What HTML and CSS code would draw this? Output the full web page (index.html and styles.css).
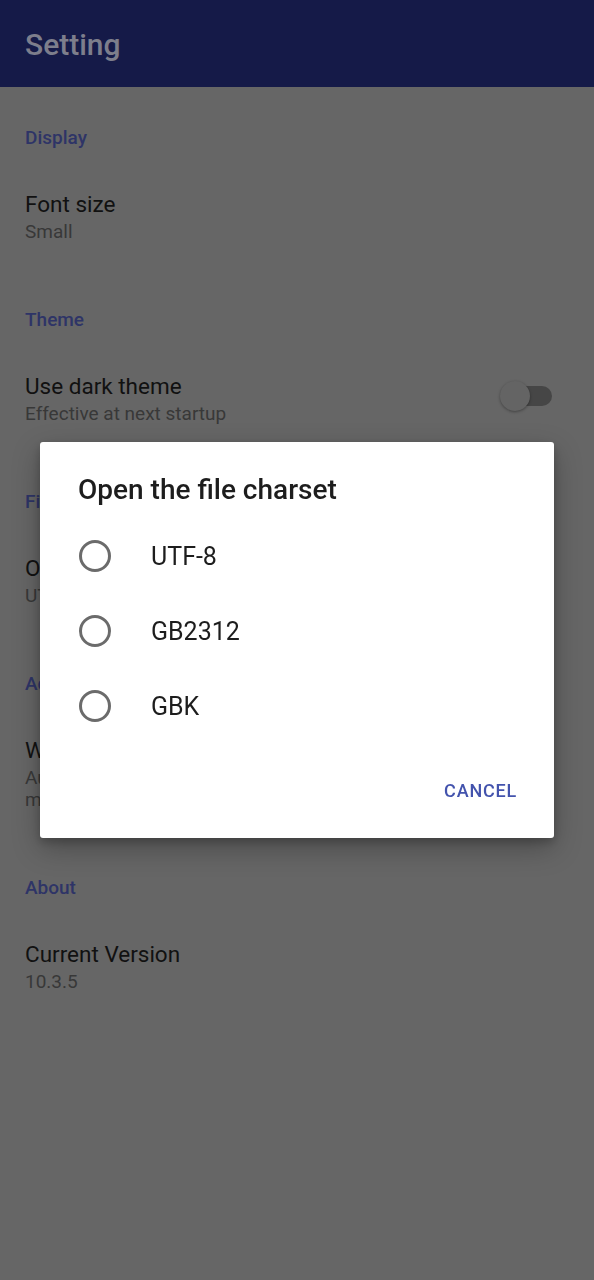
FILE: index.html
```html
<!DOCTYPE html>
<html lang="en">
<head>
<meta charset="utf-8">
<title>Setting</title>
<link rel="stylesheet" href="styles.css">
</head>
<body>
<div class="app">
  <header class="appbar"><h1 class="appbar-title">Setting</h1></header>
  <main class="prefs">
    <section class="section">
      <h2 class="section-title">Display</h2>
      <div class="item"><div class="item-text"><div class="item-title">Font size</div><div class="item-summary">Small</div></div></div>
    </section>
    <section class="section">
      <h2 class="section-title">Theme</h2>
      <div class="item">
        <div class="item-text"><div class="item-title">Use dark theme</div><div class="item-summary">Effective at next startup</div></div>
        <div class="switch"><span class="switch-track"></span><span class="switch-thumb"></span></div>
      </div>
    </section>
    <section class="section">
      <h2 class="section-title">File</h2>
      <div class="item"><div class="item-text"><div class="item-title">Open the file charset</div><div class="item-summary">UTF-8</div></div></div>
    </section>
    <section class="section">
      <h2 class="section-title">Advanced</h2>
      <div class="item"><div class="item-text"><div class="item-title">Word wrap</div><div class="item-summary">Automatically wrap long lines<br>make reading easier</div></div></div>
    </section>
    <section class="section">
      <h2 class="section-title">About</h2>
      <div class="item"><div class="item-text"><div class="item-title">Current Version</div><div class="item-summary">10.3.5</div></div></div>
    </section>
  </main>
</div>
<div class="scrim">
  <div class="dialog">
    <h3 class="dialog-title">Open the file charset</h3>
    <ul class="options">
      <li class="option"><span class="radio"></span><span class="option-label">UTF-8</span></li>
      <li class="option"><span class="radio"></span><span class="option-label">GB2312</span></li>
      <li class="option"><span class="radio"></span><span class="option-label">GBK</span></li>
    </ul>
    <div class="actions"><button class="btn-text">CANCEL</button></div>
  </div>
</div>
</body>
</html>
```
FILE: styles.css
```css
* { box-sizing: border-box; }
html, body { margin: 0; padding: 0; }
body {
  width: 594px;
  min-height: 1280px;
  background: #666666;
  font-family: Roboto, "Noto Sans", "Liberation Sans", sans-serif;
  color: #111111;
}
.app { min-height: 1280px; }
.appbar {
  height: 87px;
  background: #151a48;
  display: flex;
  align-items: center;
  padding: 0 25px;
}
.appbar-title {
  margin: 0;
  font-size: 30px;
  font-weight: 500;
  color: #7d7e8c;
  line-height: 1;
  padding-top: 2px;
}
.prefs { display: flex; flex-direction: column; }
.section { padding: 39px 25px 26px; }
.section-title {
  margin: 0 0 40px;
  font-size: 19px;
  line-height: 24px;
  font-weight: 500;
  color: #2e3467;
}
.item { display: flex; align-items: center; justify-content: space-between; }
.item-title {
  font-size: 22.5px;
  line-height: 28px;
  color: #111111;
}
.item-summary {
  margin-top: 3px;
  font-size: 19px;
  line-height: 22px;
  color: #383838;
}
.switch {
  position: relative;
  width: 52px;
  height: 32px;
  margin-right: 17px;
  margin-top: -6px;
}
.switch-track {
  position: absolute;
  left: 12px; top: 6px;
  width: 40px; height: 20px;
  border-radius: 10px;
  background: #464646;
}
.switch-thumb {
  position: absolute;
  left: 0; top: 1px;
  width: 30px; height: 30px;
  border-radius: 50%;
  background: #646464;
  box-shadow: 0 1px 3px rgba(0,0,0,0.35);
}
.scrim {
  position: fixed;
  inset: 0;
  display: flex;
  align-items: center;
  justify-content: center;
}
.dialog {
  width: 514px;
  height: 396px;
  background: #ffffff;
  border-radius: 3px;
  box-shadow: 0 10px 28px rgba(0,0,0,0.28), 0 4px 10px rgba(0,0,0,0.2);
  display: flex;
  flex-direction: column;
  padding: 29px 37px 32px 38px;
}
.dialog-title {
  margin: 0;
  font-size: 28px;
  line-height: 38px;
  font-weight: 500;
  color: #1d1d1d;
}
.options {
  list-style: none;
  margin: 23px 0 0;
  padding: 0;
  display: flex;
  flex-direction: column;
  gap: 27px;
}
.option {
  display: flex;
  align-items: center;
  height: 48px;
}
.radio {
  width: 32px;
  height: 32px;
  border: 3px solid #6b6b6b;
  border-radius: 50%;
  margin-left: 1px;
  flex-shrink: 0;
}
.option-label {
  margin-left: 40px;
  font-size: 25px;
  color: #1d1d1d;
}
.actions {
  margin-top: auto;
  display: flex;
  justify-content: flex-end;
}
.btn-text {
  border: 0;
  background: none;
  padding: 0;
  font-family: Roboto, "Noto Sans", "Liberation Sans", sans-serif;
  font-size: 18px;
  font-weight: 500;
  letter-spacing: 0.8px;
  color: #4353ad;
  line-height: 26px;
  margin-bottom: 2px;
}
```
